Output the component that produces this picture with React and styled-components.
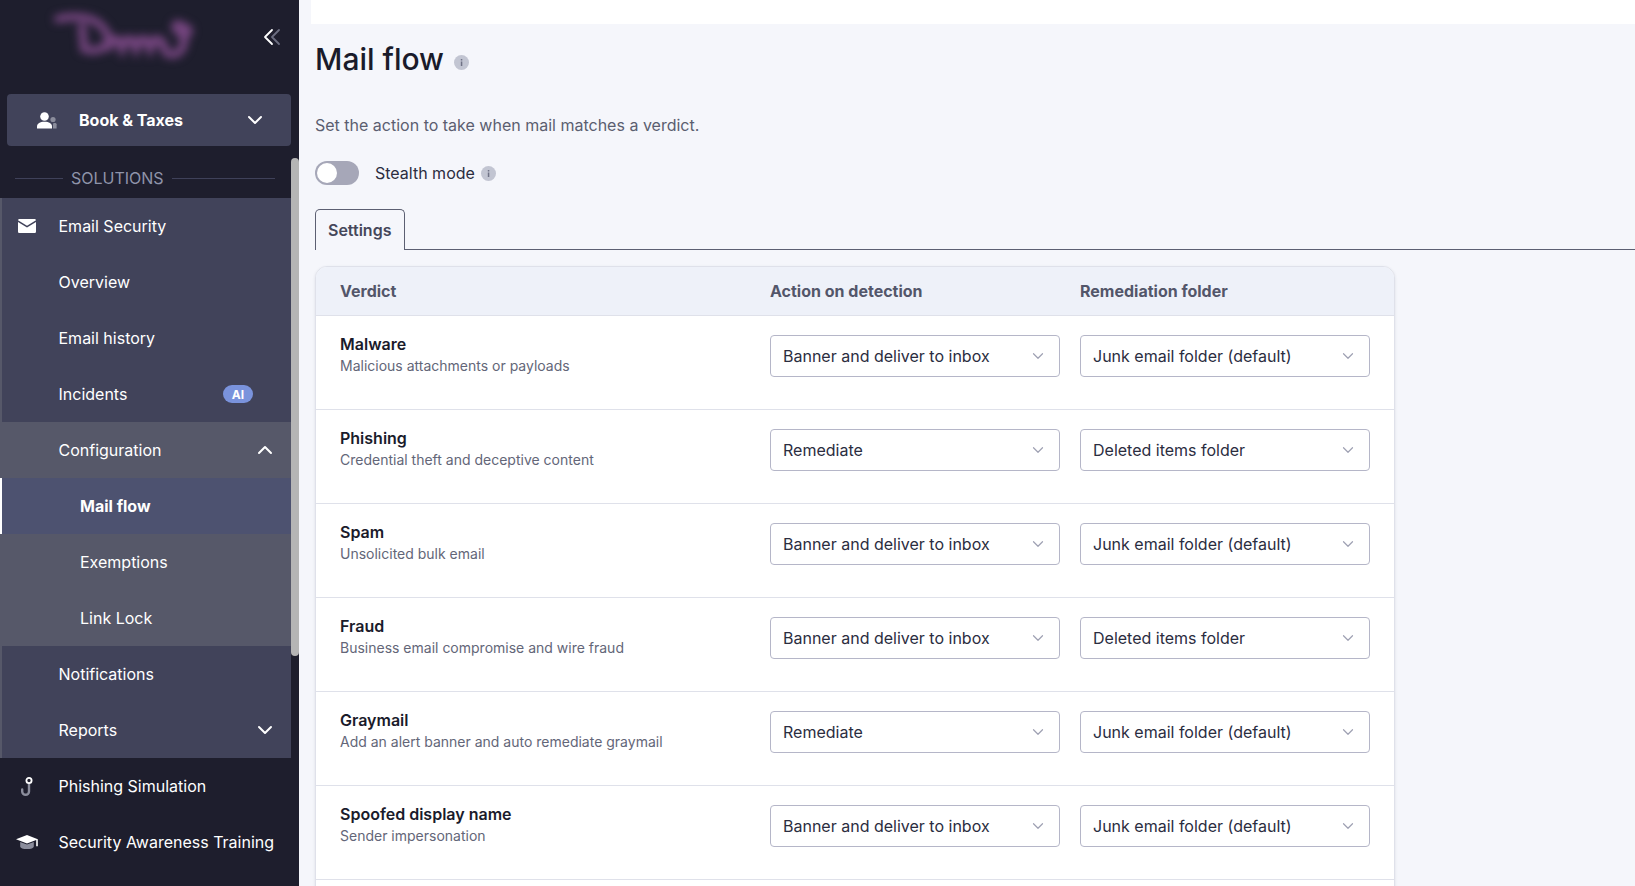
import React from 'react'
import styled, { createGlobalStyle } from 'styled-components'

const GlobalStyle = createGlobalStyle`
  html, body {
    margin: 0;
    height: 100%;
    overflow: hidden;
    background: #f5f6fb;
    font-family: Inter, "Noto Sans", sans-serif;
  }
  * { box-sizing: border-box; }
`

const Page = styled.div`
  display: flex;
  height: 886px;
  overflow: hidden;
`
const Sidebar = styled.aside`
  position: relative;
  flex: 0 0 299px;
  min-width: 0;
  height: 100%;
  padding-right: 8px;
  background: #1e1e2d;
  color: #fff;
`
const ScrollThumb = styled.div`
  position: absolute;
  top: 158px;
  left: 291px;
  width: 8px;
  height: 498px;
  border-radius: 4px;
  background: #b5b5b5;
`
const LogoRow = styled.div`
  display: flex;
  align-items: center;
  justify-content: space-between;
  height: 94px;
  padding: 0 10px 20px 50px;
`
const LogoMark = styled.svg`
  filter: blur(4.5px);
  overflow: visible;
`
const CollapseButton = styled.div`
  display: flex;
`
const AccountButton = styled.div`
  display: flex;
  align-items: center;
  height: 52px;
  margin-left: 7px;
  padding: 0 28px 0 30px;
  border-radius: 4px;
  background: #41435a;
  font-size: 16px;
  font-weight: 700;
`
const AccountName = styled.span`
  flex: 1;
  margin-left: 21px;
`
const SectionLabel = styled.div`
  display: flex;
  align-items: center;
  height: 52px;
  padding: 12px 16px 0 15px;
  color: #8f94aa;
  font-size: 16px;
  &::before, &::after {
    content: "";
    height: 1px;
    background: #3f4159;
  }
  &::before { flex: 0 0 48px; margin-right: 8px; }
  &::after { flex: 1; margin-left: 8px; }
`
const Group = styled.div`
  background: #41435a;
  border-left: 2px solid #565869;
`
const SubGroup = styled.div`
  margin-left: -2px;
  background: #565869;
`
const Item = styled.div`
  display: flex;
  align-items: center;
  height: 56px;
  padding-left: ${p => p.$indent}px;
  padding-right: 18px;
  font-size: 16px;
  font-weight: ${p => (p.$active ? 700 : 400)};
  color: #fff;
  background: ${p => (p.$active ? '#4d5270' : 'transparent')};
  border-left: ${p => (p.$active ? '2px solid #fff' : '0')};
`
const ItemIcon = styled.span`
  display: flex;
  justify-content: center;
  flex: 0 0 28px;
  margin-left: -45.5px;
  margin-right: 17.5px;
`
const ItemLabel = styled.span`
  flex: 1;
  white-space: nowrap;
`
const AiBadge = styled.span`
  display: flex;
  align-items: center;
  justify-content: center;
  width: 30px;
  height: 18px;
  margin-right: 20px;
  border-radius: 9px;
  background: #7a93dc;
  font-size: 12px;
  font-weight: 700;
`
const Main = styled.main`
  flex: 1;
  min-width: 0;
  height: 100%;
  padding-left: 12px;
  overflow: hidden;
`
const TopBar = styled.div`
  height: 24px;
  background: #fff;
`
const Content = styled.div`
  padding-left: 4px;
`
const TitleRow = styled.div`
  display: flex;
  align-items: center;
  height: 36px;
  margin-top: 17px;
`
const Title = styled.h1`
  margin: 0 10px 0 0;
  color: #1a1b2b;
  font-size: 30px;
  font-weight: 500;
  line-height: 36px;
`
const TitleInfo = styled.span`
  display: flex;
  margin-top: 6px;
`
const Subtitle = styled.p`
  margin: 38px 0 0;
  color: #5b5e70;
  font-size: 16px;
  line-height: 20px;
`
const StealthRow = styled.div`
  display: flex;
  align-items: center;
  height: 24px;
  margin-top: 26px;
  color: #2b2d3f;
  font-size: 16px;
`
const Toggle = styled.div`
  display: flex;
  align-items: center;
  width: 44px;
  height: 24px;
  margin-right: 16px;
  padding-left: 2px;
  border-radius: 12px;
  background: #a6a7b8;
  &::before {
    content: "";
    width: 20px;
    height: 20px;
    border-radius: 50%;
    background: #fff;
  }
`
const StealthText = styled.span`
  margin-right: 6px;
`
const Tabs = styled.div`
  display: flex;
  margin-top: 24px;
  border-bottom: 1px solid #5c5f72;
`
const Tab = styled.div`
  width: 90px;
  height: 41px;
  margin-bottom: -1px;
  padding-left: 12px;
  border: 1px solid #5c5f72;
  border-bottom: 0;
  border-radius: 5px 5px 0 0;
  background: #f5f6fb;
  color: #45475a;
  font-size: 16px;
  font-weight: 600;
  line-height: 40px;
`
const Card = styled.div`
  width: 1080px;
  margin-top: 16px;
  border: 1px solid #dfe1ea;
  border-radius: 12px;
  background: #fff;
  box-shadow: 0 1px 3px rgba(60, 64, 90, 0.12);
  overflow: hidden;
`
const Grid = styled.div`
  display: grid;
  grid-template-columns: 410px 290px 290px;
  column-gap: 20px;
  padding-left: 24px;
`
const HeadRow = styled(Grid)`
  align-items: center;
  height: 49px;
  background: #eef1f9;
  border-bottom: 1px solid #dfe1ea;
  color: #53566a;
  font-size: 16px;
  font-weight: 700;
`
const Row = styled(Grid)`
  align-items: start;
  height: 94px;
  padding-top: 18px;
  border-bottom: 1px solid #dfe1ea;
`
const VerdictName = styled.div`
  color: #1a1b2b;
  font-size: 16px;
  font-weight: 600;
  line-height: 20px;
`
const VerdictDesc = styled.div`
  margin-top: 2px;
  color: #636678;
  font-size: 14px;
  line-height: 20px;
`
const Select = styled.div`
  display: flex;
  align-items: center;
  justify-content: space-between;
  height: 42px;
  margin-top: 1px;
  padding: 0 15px 0 12px;
  border: 1px solid #b5b6c8;
  border-radius: 4px;
  background: #fff;
  color: #2b2d3f;
  font-size: 16px;
`

const Chevron = ({ up, size = 16, color = '#fff', width = 2 }) => (
  <svg width={size} height={size} viewBox="0 0 16 16" fill="none" stroke={color} strokeWidth={width}>
    <path d={up ? 'M2 11l6-6 6 6' : 'M2 5l6 6 6-6'} strokeLinecap="round" strokeLinejoin="round" />
  </svg>
)

const InfoDot = ({ size = 15 }) => (
  <svg width={size} height={size} viewBox="0 0 15 15">
    <circle cx="7.5" cy="7.5" r="7.5" fill="#c2c5d2" />
    <rect x="6.8" y="6.5" width="1.5" height="4.5" fill="#6f7285" />
    <rect x="6.8" y="4" width="1.5" height="1.5" fill="#6f7285" />
  </svg>
)

// the logo is blurred out in the picture, so only its rough strokes are kept
const Logo = () => (
  <LogoMark width="150" height="60" viewBox="0 0 150 60" fill="none" stroke="#75457f" strokeWidth="8" strokeLinecap="round">
    <path d="M8 12C22 8 40 10 48 16C58 24 62 34 54 40C48 44 40 44 34 42" />
    <path d="M32 20L34 42" />
    <path d="M58 40C62 30 68 30 72 40C76 30 82 30 86 40C90 30 96 30 100 40C104 30 110 30 114 40" strokeWidth="9" />
    <path d="M130 24C130 30 136 30 134 36C132 46 124 50 116 46" />
    <path d="M128 20L136 24" strokeWidth="14" />
  </LogoMark>
)

const CollapseIcon = () => (
  <svg width="18" height="18" viewBox="0 0 18 18" fill="none" strokeWidth="1.8" strokeLinecap="round" strokeLinejoin="round">
    <path d="M16 2l-7 7 7 7" stroke="#6b6d80" />
    <path d="M9 2L2 9l7 7" stroke="#fff" />
  </svg>
)

const AccountIcon = () => (
  <svg width="21" height="17" viewBox="0 0 21 17">
    <circle cx="16" cy="7.5" r="2.6" fill="#8b8d9c" />
    <path d="M16 16.5v-4.2c0-.8.6-1.3 1.6-1.3s2 .5 2 1.3v4.2z" fill="#8b8d9c" />
    <circle cx="7.5" cy="4.5" r="4.3" fill="#fff" />
    <path d="M0 16.5v-2C0 11.5 3 9.8 7.5 9.8s7.5 1.7 7.5 4.7v2z" fill="#fff" />
  </svg>
)

const MailIcon = () => (
  <svg width="18" height="14" viewBox="0 0 18 14">
    <path d="M1.6 0h14.8c.8 0 1.4.5 1.6 1.2L9 6.8 0 1.2C.2.5.8 0 1.6 0z" fill="#fff" />
    <path d="M0 3l9 5.6L18 3v9.4c0 .9-.7 1.6-1.6 1.6H1.6C.7 14 0 13.3 0 12.4z" fill="#fff" />
  </svg>
)

const HookIcon = () => (
  <svg width="14" height="19" viewBox="0 0 14 19" fill="none">
    <path d="M9 7v7.4a3.4 3.4 0 0 1-6.8 0V12.5" stroke="#8b8d9c" strokeWidth="2.4" strokeLinecap="round" />
    <circle cx="9" cy="3.5" r="2.6" stroke="#fff" strokeWidth="1.8" />
  </svg>
)

const CapIcon = () => (
  <svg width="22" height="14" viewBox="0 0 22 14">
    <path d="M4.2 7v4.4C4.2 13 7.2 14 11 14s6.8-1 6.8-2.6V7L11 9.6z" fill="#8b8d9c" />
    <path d="M11 0L0 4.2l11 4.4 9.2-3.7v6.3h1.6V4.2z" fill="#fff" />
  </svg>
)

const rows = [
  ['Malware', 'Malicious attachments or payloads', 'Banner and deliver to inbox', 'Junk email folder (default)'],
  ['Phishing', 'Credential theft and deceptive content', 'Remediate', 'Deleted items folder'],
  ['Spam', 'Unsolicited bulk email', 'Banner and deliver to inbox', 'Junk email folder (default)'],
  ['Fraud', 'Business email compromise and wire fraud', 'Banner and deliver to inbox', 'Deleted items folder'],
  ['Graymail', 'Add an alert banner and auto remediate graymail', 'Remediate', 'Junk email folder (default)'],
  ['Spoofed display name', 'Sender impersonation', 'Banner and deliver to inbox', 'Junk email folder (default)'],
]

const FieldSelect = ({ value }) => (
  <Select>
    {value}
    <Chevron size={12} color="#9fa1b3" width={1.6} />
  </Select>
)

const App = () => {
  return (
    <Page>
      <GlobalStyle />
      <Sidebar>
        <LogoRow>
          <Logo />
          <CollapseButton><CollapseIcon /></CollapseButton>
        </LogoRow>
        <AccountButton>
          <AccountIcon />
          <AccountName>Book &amp; Taxes</AccountName>
          <Chevron />
        </AccountButton>
        <SectionLabel>SOLUTIONS</SectionLabel>
        <Group>
          <Item $indent={56.5}>
            <ItemIcon><MailIcon /></ItemIcon>
            <ItemLabel>Email Security</ItemLabel>
          </Item>
          <Item $indent={56.5}><ItemLabel>Overview</ItemLabel></Item>
          <Item $indent={56.5}><ItemLabel>Email history</ItemLabel></Item>
          <Item $indent={56.5}>
            <ItemLabel>Incidents</ItemLabel>
            <AiBadge>AI</AiBadge>
          </Item>
          <SubGroup>
            <Item $indent={58.5}>
              <ItemLabel>Configuration</ItemLabel>
              <Chevron up />
            </Item>
            <Item $indent={78} $active><ItemLabel>Mail flow</ItemLabel></Item>
            <Item $indent={80}><ItemLabel>Exemptions</ItemLabel></Item>
            <Item $indent={80}><ItemLabel>Link Lock</ItemLabel></Item>
          </SubGroup>
          <Item $indent={56.5}><ItemLabel>Notifications</ItemLabel></Item>
          <Item $indent={56.5}>
            <ItemLabel>Reports</ItemLabel>
            <Chevron />
          </Item>
        </Group>
        <Item $indent={58.5}>
          <ItemIcon><HookIcon /></ItemIcon>
          <ItemLabel>Phishing Simulation</ItemLabel>
        </Item>
        <Item $indent={58.5}>
          <ItemIcon><CapIcon /></ItemIcon>
          <ItemLabel>Security Awareness Training</ItemLabel>
        </Item>
        <ScrollThumb />
      </Sidebar>
      <Main>
        <TopBar />
        <Content>
          <TitleRow>
            <Title>Mail flow</Title>
            <TitleInfo><InfoDot /></TitleInfo>
          </TitleRow>
          <Subtitle>Set the action to take when mail matches a verdict.</Subtitle>
          <StealthRow>
            <Toggle />
            <StealthText>Stealth mode</StealthText>
            <InfoDot />
          </StealthRow>
          <Tabs><Tab>Settings</Tab></Tabs>
          <Card>
            <HeadRow>
              <span>Verdict</span>
              <span>Action on detection</span>
              <span>Remediation folder</span>
            </HeadRow>
            {rows.map(r => (
              <Row key={r[0]}>
                <div>
                  <VerdictName>{r[0]}</VerdictName>
                  <VerdictDesc>{r[1]}</VerdictDesc>
                </div>
                <FieldSelect value={r[2]} />
                <FieldSelect value={r[3]} />
              </Row>
            ))}
            <Row />
          </Card>
        </Content>
      </Main>
    </Page>
  )
}

export default App
